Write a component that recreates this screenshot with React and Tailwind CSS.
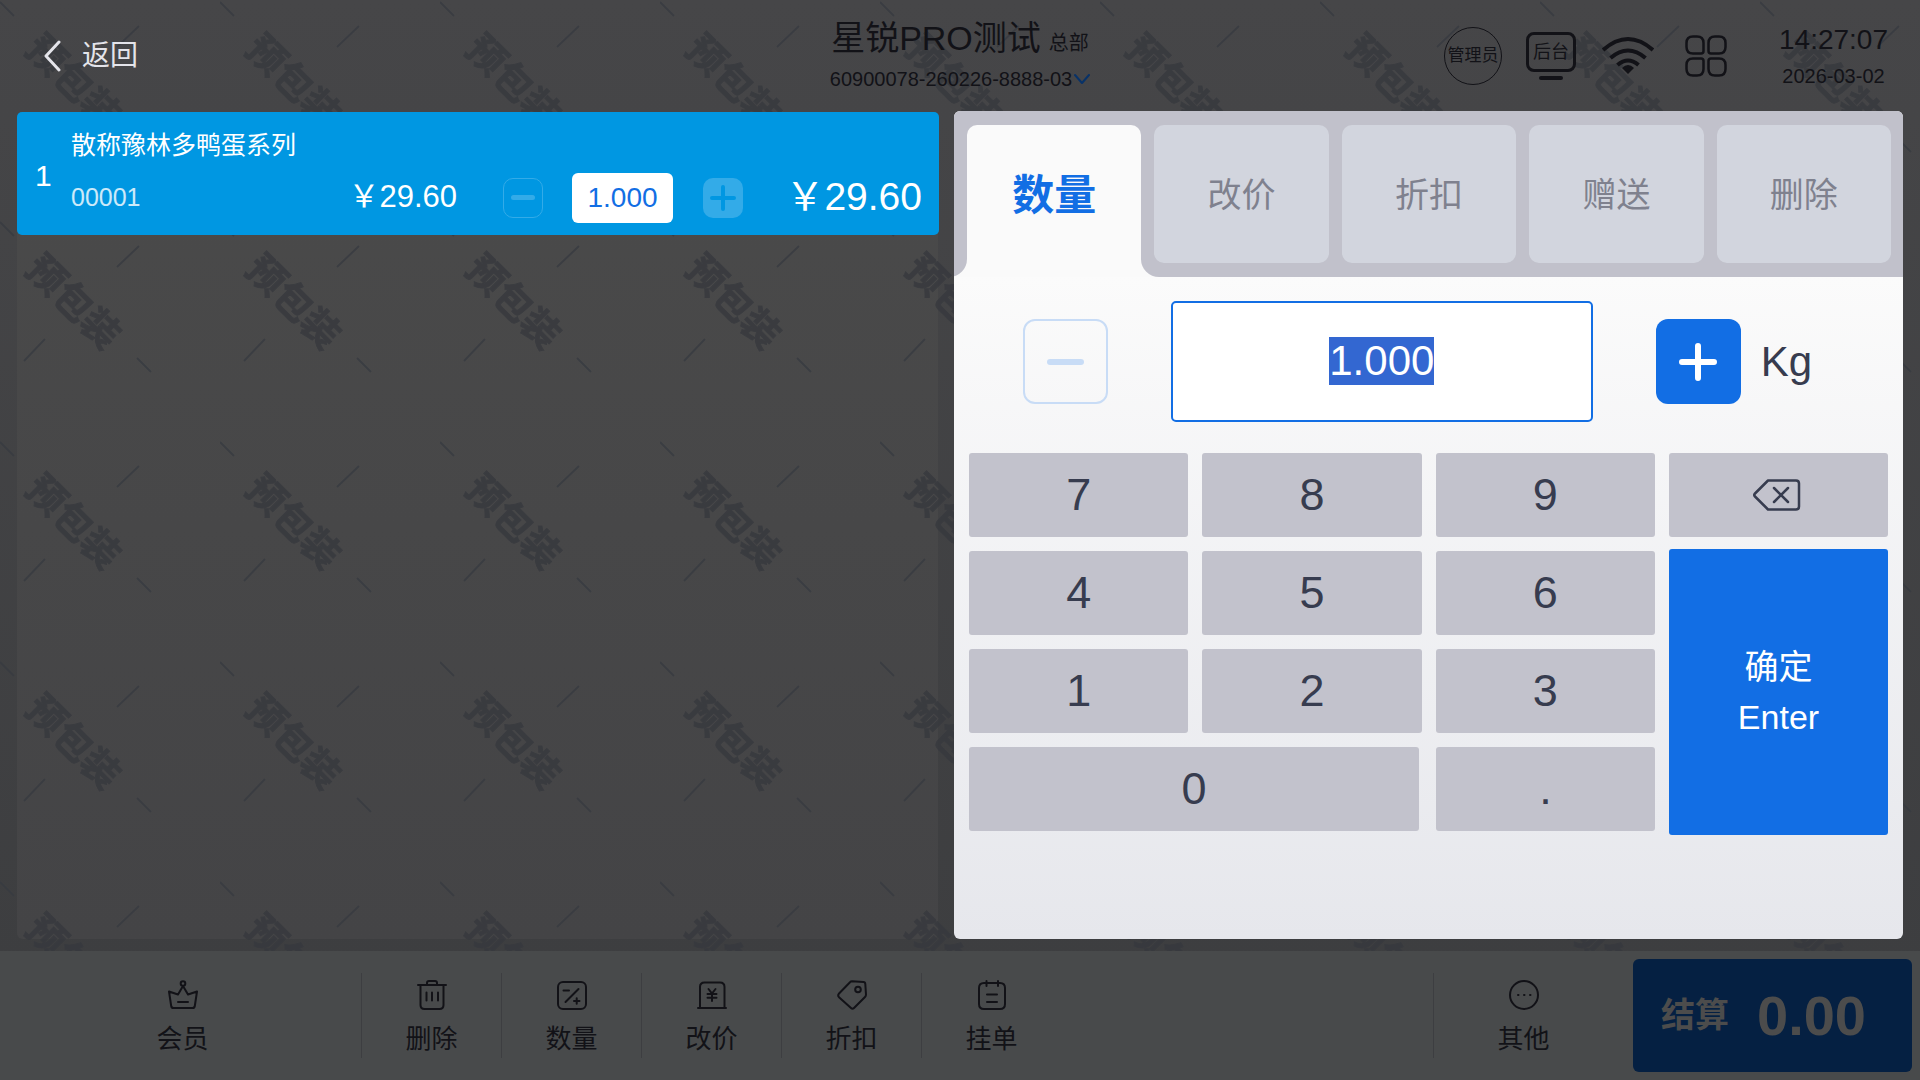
import React, { useEffect, useRef, useState } from 'react';

const TABS = ['数量', '改价', '折扣', '赠送', '删除'];

const Watermark = () => (
  <svg className="absolute inset-0 w-full h-full" aria-hidden="true">
    <defs>
      <pattern id="mark" width="220" height="220" patternUnits="userSpaceOnUse">
        <g stroke="#373a40" strokeWidth="2" fill="none">
          <path d="M0 2L14 16M137 138L151 152M117 47L139 26M24 141L45 119" />
        </g>
        <text
          x="73"
          y="82"
          transform="rotate(45 73 82)"
          textAnchor="middle"
          dominantBaseline="central"
          fontSize="38"
          fontWeight="700"
          fill="#36383d"
          stroke="#36383d"
        >
          预包装
        </text>
      </pattern>
    </defs>
    <rect width="100%" height="100%" fill="url(#mark)" opacity="0.8" />
  </svg>
);

const Icon = ({ children, className = 'w-[30px] h-[30px]', box = '0 0 30 30', width = 2 }) => (
  <svg
    className={className}
    viewBox={box}
    fill="none"
    stroke="currentColor"
    strokeWidth={width}
    strokeLinecap="round"
    strokeLinejoin="round"
    aria-hidden="true"
  >
    {children}
  </svg>
);

const CrownIcon = () => (
  <Icon>
    <circle cx="15" cy="3.5" r="2.3" />
    <path d="M15 6L10 14.5L1 11.5L3.2 26Q3.5 28 5.5 28H24.5Q26.5 28 26.8 26L29 11.5L20 14.5ZM10 22H20" />
  </Icon>
);

const TrashIcon = () => (
  <Icon>
    <path d="M1 5H29M10 5V3Q10 1 12 1H18Q20 1 20 3V5M3.5 5V25Q3.5 29 7.5 29H22.5Q26.5 29 26.5 25V5M9.5 12.5V20.5M15 12.5V20.5M21 12.5V20.5" />
  </Icon>
);

const QuantityIcon = () => (
  <Icon>
    <rect x="1" y="2" width="28" height="27" rx="5" />
    <path d="M21.5 9L8.5 22M6.5 10.5H12M17 21H22.5M19.7 18.2V23.7" />
  </Icon>
);

const PriceIcon = () => (
  <Icon>
    <path d="M1 28H29M3 28V7Q3 2.5 7.5 2.5H23Q27.5 2.5 27.5 7V28M11.5 9L15 13.5L18.5 9M15 13.5V21M10.5 14H19.5M10.5 17.8H19.5" />
  </Icon>
);

const TagIcon = () => (
  <Icon>
    <path d="M15 1.2L26.5 2Q28.2 2.1 28.3 4L29 14.5Q29 16 28 17L17 28Q15.5 29.5 14 28L2 17.2Q0.5 15.5 1.8 13.8L13 2.2Q13.8 1.2 15 1.2Z" />
    <circle cx="21" cy="9.5" r="2.8" />
  </Icon>
);

const OrderIcon = () => (
  <Icon>
    <path d="M8 3H7Q2 3 2 8V24Q2 29 7 29H23Q28 29 28 24V8Q28 3 23 3H22M11 3H20M9.5 1V6M21 1V6M10 14.5H20M10 22H20" />
  </Icon>
);

const MoreIcon = () => (
  <Icon>
    <circle cx="15" cy="15" r="14" />
    <path d="M9 15H9.5M15 15H15.5M21 15H21.5" />
  </Icon>
);

const ACTIONS = [
  { label: '删除', icon: TrashIcon },
  { label: '数量', icon: QuantityIcon },
  { label: '改价', icon: PriceIcon },
  { label: '折扣', icon: TagIcon },
  { label: '挂单', icon: OrderIcon },
];

const FooterButton = ({ label, icon: Glyph }) => (
  <button className="flex w-full flex-col items-center gap-3 pt-1 text-[26px] leading-[34px]">
    <Glyph />
    {label}
  </button>
);

const Header = () => (
  <header className="grid h-[111px] shrink-0 grid-cols-3 items-center px-8 pt-px text-[#121217]">
    <button className="ml-2 flex items-center justify-self-start gap-[18px] text-[28px] leading-9 text-[#e4e4ea]">
      <Icon className="w-6 h-8" box="0 0 24 32" width={3}>
        <path d="M19 2L6 16L19 30" />
      </Icon>
      返回
    </button>

    <div className="flex flex-col items-center">
      <div className="flex items-baseline gap-2 text-[34px] leading-[46px]">
        星锐PRO测试 <span className="text-xl">总部</span>
      </div>
      <button className="flex items-center text-xl leading-9">
        60900078-260226-8888-03
        <Icon className="ml-[2px] w-4 h-4 text-[#083268]" box="0 0 16 16" width={2}>
          <path d="M1 4L8 12L15 4" />
        </Icon>
      </button>
    </div>

    <div className="flex items-center justify-self-end">
      <button className="h-[58px] w-[58px] rounded-full border border-[#121217] text-[17px]">管理员</button>
      <button className="ml-6 flex flex-col items-center gap-1">
        <span className="flex h-10 w-[50px] items-center justify-center rounded-lg border-3 border-[#121217] text-lg">
          后台
        </span>
        <span className="h-1 w-6 rounded-sm bg-[#121217]" />
      </button>
      <Icon className="ml-[26px] w-[52px] h-[40px]" box="0 0 52 40" width={4}>
        <path strokeLinecap="butt" d="M1 14Q26 -8 51 14M8.5 22Q26 7 43.5 22M15.5 29Q26 20 36.5 29" />
        <path stroke="none" fill="currentColor" d="M20 32Q26 26 32 32L26 38Z" />
      </Icon>
      <button className="ml-[31px]" aria-label="应用">
        <Icon className="w-[42px] h-[42px]" box="0 0 42 42" width={2.5}>
          <path d="M8 1.5H12Q18.5 1.5 18.5 8V16Q18.5 18.5 16 18.5H8Q1.5 18.5 1.5 12V8Q1.5 1.5 8 1.5Z" />
          <path d="M30 1.5H34Q40.5 1.5 40.5 8V12Q40.5 18.5 34 18.5H26Q23.5 18.5 23.5 16V8Q23.5 1.5 30 1.5Z" />
          <path d="M8 23.5H16Q18.5 23.5 18.5 26V34Q18.5 40.5 12 40.5H8Q1.5 40.5 1.5 34V30Q1.5 23.5 8 23.5Z" />
          <path d="M26 23.5H34Q40.5 23.5 40.5 30V34Q40.5 40.5 34 40.5H30Q23.5 40.5 23.5 34V26Q23.5 23.5 26 23.5Z" />
        </Icon>
      </button>
      <div className="ml-[52px] flex flex-col items-center">
        <span className="text-[28px] leading-10">14:27:07</span>
        <span className="text-xl leading-8">2026-03-02</span>
      </div>
    </div>
  </header>
);

const CartItem = () => (
  <div className="flex h-[123px] items-center rounded-[5px] bg-[#0097e2] pl-[18px] pr-[17px] pt-1 text-white">
    <span className="w-9 text-[30px] leading-9">1</span>
    <div className="flex flex-1 flex-col gap-3">
      <div className="text-[25px] leading-8">散称豫林多鸭蛋系列</div>
      <div className="flex h-[50px] items-center">
        <span className="flex-1 text-[25px] text-white/80">00001</span>
        <span className="text-[31px]">￥29.60</span>
        <button
          className="ml-[46px] flex h-10 w-10 items-center justify-center rounded-[10px] border border-[#33abe8]"
          aria-label="减少"
        >
          <span className="h-[5px] w-6 rounded-full bg-[#33abe8]" />
        </button>
        <input
          className="ml-[29px] h-[50px] w-[101px] rounded-md bg-white text-center text-[28px] text-[#126ee4]"
          aria-label="商品数量"
          defaultValue="1.000"
        />
        <button
          className="ml-[30px] flex h-10 w-10 items-center justify-center rounded-[10px] bg-[#33abe8] text-[#0097e2]"
          aria-label="增加"
        >
          <Icon className="w-[26px] h-[26px]" box="0 0 26 26" width={4}>
            <path d="M13 2V24M2 13H24" />
          </Icon>
        </button>
        <span className="w-[179px] text-right text-[39px]">￥29.60</span>
      </div>
    </div>
  </div>
);

const Key = ({ children, onClick, className = 'flex-1' }) => (
  <button
    onClick={onClick}
    className={`${className} flex h-[84px] items-center justify-center rounded-[3px] bg-[#c2c2cc] text-[45px] text-[#373c4f]`}
  >
    {children}
  </button>
);

const QuantityPanel = () => {
  const [tab, setTab] = useState('数量');
  const [value, setValue] = useState('1.000');
  const inputRef = useRef(null);

  useEffect(() => {
    inputRef.current.focus();
    inputRef.current.select();
  }, []);

  const press = (k) => setValue((v) => (v === '1.000' ? k : v + k));

  return (
    <section className="flex flex-1 flex-col overflow-hidden rounded-md bg-linear-to-b from-[#fbfbfb] from-20% to-[#e6e7ec] text-[#373c4f]">
      {/* Tabs */}
      <div className="flex h-[166px] shrink-0 gap-[13px] bg-[#c1c1cb] pl-[13px] pr-3 pt-[14px]">
        {TABS.map((name) =>
          name === tab ? (
            <button
              key={name}
              className="relative h-[152px] flex-1 rounded-t-[10px] bg-[#fafafa] pb-3 text-[42px] font-bold text-[#126ee4]"
            >
              <span className="absolute bottom-0 right-full h-[18px] w-[18px] bg-[#fafafa]">
                <span className="block h-full w-full rounded-br-[18px] bg-[#c1c1cb]" />
              </span>
              <span className="absolute bottom-0 left-full h-[18px] w-[18px] bg-[#fafafa]">
                <span className="block h-full w-full rounded-bl-[18px] bg-[#c1c1cb]" />
              </span>
              {name}
            </button>
          ) : (
            <button
              key={name}
              onClick={() => setTab(name)}
              className="relative h-[138px] flex-1 rounded-[10px] bg-[#d2d5de] pt-[2px] text-[34px] text-[#7f818e]"
            >
              {name}
            </button>
          )
        )}
      </div>

      {/* Amount */}
      <div className="mt-6 flex items-center pl-[69px] pr-[91px]">
        <button
          className="flex h-[85px] w-[85px] items-center justify-center rounded-xl border-2 border-[#c8dcf6]"
          aria-label="减少"
        >
          <span className="h-[6px] w-[37px] rounded-full bg-[#c8dcf6]" />
        </button>
        <input
          ref={inputRef}
          value={value}
          onChange={(e) => setValue(e.target.value)}
          aria-label="数量"
          className="mx-[63px] h-[121px] min-w-0 flex-1 rounded-[5px] border-2 border-[#126ee4] bg-white pb-[2px] text-center text-[42px] outline-none selection:bg-[#3367d1] selection:text-white"
        />
        <button
          className="flex h-[85px] w-[85px] items-center justify-center rounded-xl bg-[#126ee4] text-white"
          aria-label="增加"
        >
          <Icon className="w-[38px] h-[38px]" box="0 0 38 38" width={6}>
            <path d="M19 3V35M3 19H35" />
          </Icon>
        </button>
        <span className="ml-5 text-[42px]">Kg</span>
      </div>

      {/* Keypad */}
      <div className="mt-[31px] flex gap-[14px] pl-[15px] pr-[15px]">
        <div className="flex flex-3 flex-col gap-[14px]">
          {['789', '456', '123'].map((row) => (
            <div key={row} className="flex gap-[14px]">
              {row.split('').map((k) => (
                <Key key={k} onClick={() => press(k)}>
                  {k}
                </Key>
              ))}
            </div>
          ))}
          <div className="flex gap-[17px]">
            <Key onClick={() => press('0')}>0</Key>
            <Key onClick={() => press('.')} className="w-[219px]">
              .
            </Key>
          </div>
        </div>
        <div className="flex w-[219px] flex-col gap-3">
          <Key className="w-full pr-1" onClick={() => setValue((v) => v.slice(0, -1))}>
            <Icon className="w-12 h-8" box="0 0 48 32" width={2.5}>
              <path d="M15 1.5H43Q46 1.5 46 4.5V27.5Q46 30.5 43 30.5H15L2 17.5Q0.5 16 2 14.5ZM21 9L35 23M35 9L21 23" />
            </Icon>
          </Key>
          <button className="flex h-[286px] flex-col items-center justify-center rounded-[3px] bg-[#126ee4] text-[34px] leading-[50px] text-white">
            <span>确定</span>
            <span>Enter</span>
          </button>
        </div>
      </div>
    </section>
  );
};

const Footer = () => (
  <footer className="relative flex h-[129px] shrink-0 items-center bg-[#484a4b] pr-2 text-[#121217]">
    <div className="w-[361px] pl-1">
      <FooterButton label="会员" icon={CrownIcon} />
    </div>
    {ACTIONS.map((a) => (
      <div key={a.label} className="flex h-[85px] w-[140px] items-center border-l border-[#3d3e41]">
        <FooterButton label={a.label} icon={a.icon} />
      </div>
    ))}
    <div className="ml-auto flex h-[85px] w-[180px] items-center border-l border-[#3d3e41]">
      <FooterButton label="其他" icon={MoreIcon} />
    </div>
    <button className="ml-5 flex h-[113px] w-[279px] items-center gap-7 rounded-md bg-[#052042] pl-7 font-bold text-[#4c4c4c]">
      <span className="text-[34px]">结算</span>
      <span className="text-[56px]">0.00</span>
    </button>
  </footer>
);

const App = () => (
  <div className="relative flex min-h-screen flex-col bg-linear-to-b from-[#464648] to-[#3c3d3f] font-['Liberation_Sans','Noto_Sans_CJK_SC',sans-serif]">
    <div className="relative flex flex-1 flex-col">
      <div className="absolute top-[112px] bottom-3 left-[17px] w-[921px] rounded-md bg-linear-to-b from-[#4a4a4a] to-[#444446]" />
      <Watermark />
      <div className="relative flex flex-1 flex-col">
        <Header />
        <main className="flex flex-1 gap-[15px] pb-3 pl-[17px] pr-[17px]">
          <div className="w-[922px] pt-px">
            <CartItem />
          </div>
          <QuantityPanel />
        </main>
      </div>
    </div>
    <Footer />
  </div>
);

export default App;
